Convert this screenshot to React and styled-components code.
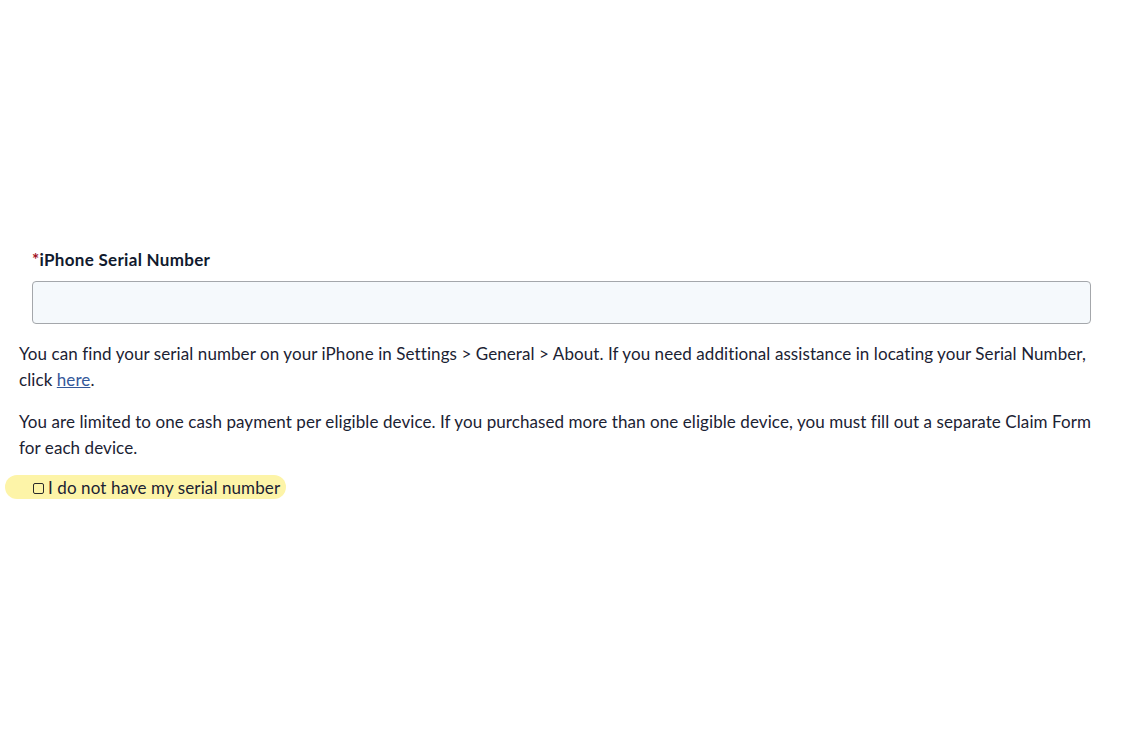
import React from "react";
import styled, { createGlobalStyle } from "styled-components";

const GlobalStyle = createGlobalStyle`
  html, body {
    margin: 0;
    padding: 0;
    background: #fff;
  }
  body {
    font-family: "Lato", "Liberation Sans", sans-serif;
    color: #1b2233;
  }
`;

const Page = styled.main`
  padding: 249px 19px 0 19px;
  width: 1087px;
`;

const Field = styled.div`
  padding: 0 15px 0 13px;
  display: flex;
  flex-direction: column;
  gap: 10px;
`;

const Label = styled.label`
  font-size: 17px;
  font-weight: 700;
  line-height: 22px;
  letter-spacing: 0.3px;
  color: #111a2e;
`;

const Required = styled.span`
  color: #a3121f;
`;

const Input = styled.input`
  box-sizing: border-box;
  height: 43px;
  width: 100%;
  border: 1px solid #a4a7ab;
  border-radius: 4px;
  background: #f5f9fc;
  font: inherit;
  padding: 0 12px;
`;

const Text = styled.p`
  margin: ${(p) => p.$top || 0}px 0 0;
  font-size: 17px;
  line-height: 26px;
  letter-spacing: 0.08px;
`;

const Link = styled.a`
  color: #34589a;
  text-decoration: underline;
`;

const CheckRow = styled.label`
  margin: 14px 0 0 -14px;
  display: inline-flex;
  align-items: center;
  gap: 4px;
  height: 24px;
  padding: 0 6px 0 28px;
  background: #fdf4a8;
  border-radius: 12px;
  font-size: 17px;
  letter-spacing: 0.1px;
`;

const Box = styled.span`
  box-sizing: border-box;
  width: 11px;
  height: 11px;
  border: 1px solid #2a2a2a;
  border-radius: 2px;
  margin-top: 3px;
`;

export default function App() {
  return (
    <>
      <GlobalStyle />
      <Page>
        <Field>
          <Label>
            <Required>*</Required>iPhone Serial Number
          </Label>
          <Input type="text" />
        </Field>
        <Text $top={17}>
          You can find your serial number on your iPhone in Settings &gt; General &gt; About. If you need additional
          assistance in locating your Serial Number, click <Link href="#">here</Link>.
        </Text>
        <Text $top={16}>
          You are limited to one cash payment per eligible device. If you purchased more than one eligible device, you
          must fill out a separate Claim Form for each device.
        </Text>
        <CheckRow>
          <Box />
          I do not have my serial number
        </CheckRow>
      </Page>
    </>
  );
}
